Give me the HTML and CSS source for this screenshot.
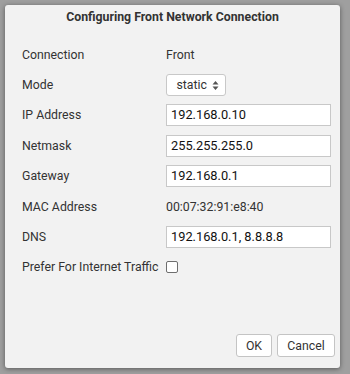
FILE: index.html
```html
<!DOCTYPE html>
<html>
<head>
<meta charset="utf-8">
<link rel="stylesheet" href="styles.css">
</head>
<body>
<div class="dialog">
  <div class="title">Configuring Front Network Connection</div>
  <div class="form">
    <div class="row"><span class="label">Connection</span><span class="value">Front</span></div>
    <div class="row"><span class="label">Mode</span>
      <span class="select">static
        <svg class="arrows" width="7" height="11" viewBox="0 0 7 11"><path d="M0.5 4.5 L3.5 1 L6.5 4.5 Z M0.5 6.5 L3.5 10 L6.5 6.5 Z" fill="#555"/></svg>
      </span>
    </div>
    <div class="row"><span class="label">IP Address</span><span class="input">192.168.0.10</span></div>
    <div class="row"><span class="label">Netmask</span><span class="input">255.255.255.0</span></div>
    <div class="row"><span class="label">Gateway</span><span class="input">192.168.0.1</span></div>
    <div class="row"><span class="label">MAC Address</span><span class="value">00:07:32:91:e8:40</span></div>
    <div class="row"><span class="label">DNS</span><span class="input">192.168.0.1, 8.8.8.8</span></div>
    <div class="row"><span class="label">Prefer For Internet Traffic</span><span class="check"></span></div>
  </div>
  <div class="buttons">
    <span class="btn ok">OK</span>
    <span class="btn">Cancel</span>
  </div>
</div>
</body>
</html>
```

FILE: styles.css
```css
html, body {
  margin: 0;
  padding: 0;
}
body {
  width: 350px;
  height: 374px;
  background: #9f9f9f;
  font-family: Roboto, "Liberation Sans", sans-serif;
  font-size: 12.3px;
  color: #333;
  padding: 5px 0 0 5px;
  box-sizing: border-box;
}
.dialog {
  width: 335px;
  height: 363px;
  background: #f2f2f2;
  border-radius: 3px;
  box-shadow: 0 1px 5px rgba(0,0,0,0.45);
  display: flex;
  flex-direction: column;
  box-sizing: border-box;
}
.title {
  text-align: center;
  font-weight: bold;
  color: #333;
  padding-top: 5px;
  height: 20px;
  line-height: 14px;
}
.form {
  margin-top: 9.5px;
  padding-left: 17px;
  display: flex;
  flex-direction: column;
}
.row {
  display: flex;
  align-items: center;
  height: 30.4px;
}
.label {
  width: 144px;
  flex: none;
  color: #333;
}
.value {
  color: #333;
}
.input {
  width: 165px;
  height: 22px;
  box-sizing: border-box;
  border: 1px solid #c8c8c8;
  background: #fff;
  padding-left: 4px;
  line-height: 20px;
  color: #111;
  font-size: 12.8px;
}
.select {
  width: 60px;
  height: 22px;
  box-sizing: border-box;
  border: 1px solid #c8c8c8;
  border-radius: 3px;
  background: #fff;
  display: flex;
  align-items: center;
  justify-content: flex-end;
  gap: 5px;
  padding-right: 6px;
  color: #333;
}
.check {
  width: 10px;
  height: 10px;
  border: 1px solid #6e6e6e;
  border-radius: 2px;
  background: #fff;
}
.buttons {
  margin-top: auto;
  margin-bottom: 11px;
  display: flex;
  justify-content: flex-end;
  gap: 5px;
  padding-right: 5px;
}
.btn {
  height: 23px;
  box-sizing: border-box;
  border: 1px solid #c4c4c4;
  border-radius: 3px;
  background: #fff;
  display: flex;
  align-items: center;
  justify-content: center;
  color: #333;
  width: 58px;
}
.ok {
  width: 36px;
}
```
